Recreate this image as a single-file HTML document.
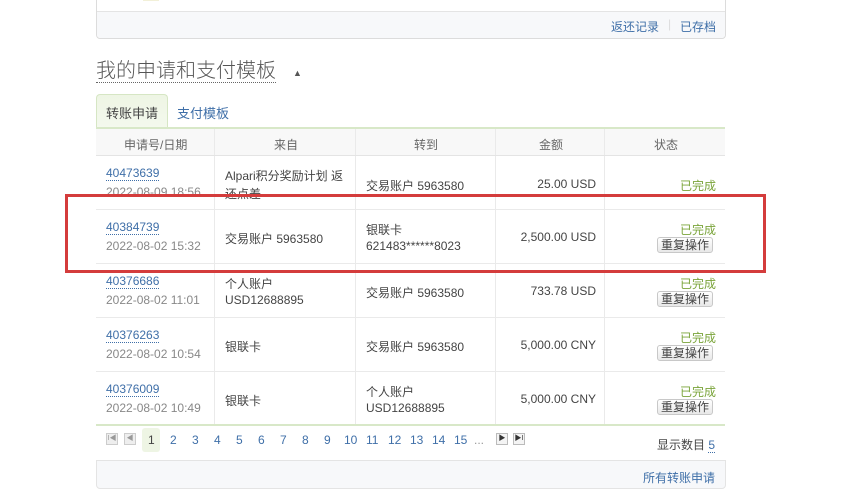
<!DOCTYPE html>
<html><head><meta charset="utf-8"><style>
*{margin:0;padding:0;box-sizing:border-box}
body{width:849px;height:491px;background:#fff;font-family:"Liberation Sans","Noto Sans CJK SC",sans-serif;font-size:12px;color:#444;position:relative;overflow:hidden}
.a{position:absolute}
.lnk{color:#3f6fa8}
.num{color:#3f6fa8;border-bottom:1px dotted #3f6fa8;line-height:13px}
.dt{color:#888}
.g{color:#7aa43a}
.amt{position:absolute;right:253px}
.st{position:absolute;right:133px;color:#7aa43a}
.rb{position:absolute;left:657px;border:1px solid #c8c8c8;border-radius:3px;background:linear-gradient(#fff,#e8e8e8);padding:0 3px;line-height:14px}
.row{position:absolute;left:96px;width:629px;height:54px;border-bottom:1px solid #eaeaea}
.c{position:absolute;top:0;height:100%;border-right:1px solid #eaeaea}
.pg{position:absolute;top:433px;color:#3f6fa8;font-size:12px}
</style></head><body>
<div class="a" style="left:96px;top:-5px;width:630px;height:44px;border:1px solid #dcdcdc;border-radius:4px"></div>
<div class="a" style="left:97px;top:11px;width:628px;height:27px;background:#f7f8fa;border-top:1px solid #e4e4e4;border-radius:0 0 4px 4px"></div>
<div class="a" style="left:143px;top:-4px;width:16px;height:5px;background:#f2f0d8"></div>
<div class="a lnk" style="left:611px;top:18px">返还记录</div>
<div class="a" style="left:668px;top:17px;color:#ddd">|</div>
<div class="a lnk" style="left:680px;top:18px">已存档</div>
<div class="a" style="left:96px;top:60px;font-size:20px;color:#555;border-bottom:1px dotted #666;line-height:22px;font-weight:300">我的申请和支付模板</div>
<div class="a" style="left:293px;top:68px;font-size:9px;color:#555">▲</div>
<div class="a" style="left:96px;top:94px;width:72px;height:35px;background:linear-gradient(#eef5e4,#f4f9ee);border:1px solid #d6e6c4;border-bottom:none;border-radius:4px 4px 0 0"></div>
<div class="a" style="left:106px;top:103px;font-size:13px;color:#444">转账申请</div>
<div class="a lnk" style="left:177px;top:103px;font-size:13px">支付模板</div>
<div class="a" style="left:96px;top:127px;width:629px;height:2px;background:#d8e8c8"></div>
<div class="row" style="top:129px;height:27px;background:#f8f8f8;border-bottom:1px solid #e4e4e4">
<div class="c" style="left:0;width:119px"></div><div class="c" style="left:119px;width:141px"></div><div class="c" style="left:260px;width:140px"></div><div class="c" style="left:400px;width:109px"></div>
</div>
<div class="a" style="top:136px;left:124px;color:#666">申请号/日期</div>
<div class="a" style="top:136px;left:274px;color:#666">来自</div>
<div class="a" style="top:136px;left:414px;color:#666">转到</div>
<div class="a" style="top:136px;left:539px;color:#666">金额</div>
<div class="a" style="top:136px;left:654px;color:#666">状态</div>

<div class="row" style="top:156px"><div class="c" style="left:0;width:119px"></div><div class="c" style="left:119px;width:141px"></div><div class="c" style="left:260px;width:140px"></div><div class="c" style="left:400px;width:109px"></div></div>
<div class="row" style="top:210px"><div class="c" style="left:0;width:119px"></div><div class="c" style="left:119px;width:141px"></div><div class="c" style="left:260px;width:140px"></div><div class="c" style="left:400px;width:109px"></div></div>
<div class="row" style="top:264px"><div class="c" style="left:0;width:119px"></div><div class="c" style="left:119px;width:141px"></div><div class="c" style="left:260px;width:140px"></div><div class="c" style="left:400px;width:109px"></div></div>
<div class="row" style="top:318px"><div class="c" style="left:0;width:119px"></div><div class="c" style="left:119px;width:141px"></div><div class="c" style="left:260px;width:140px"></div><div class="c" style="left:400px;width:109px"></div></div>
<div class="row" style="top:372px;border-bottom:2px solid #d8e8c8"><div class="c" style="left:0;width:119px"></div><div class="c" style="left:119px;width:141px"></div><div class="c" style="left:260px;width:140px"></div><div class="c" style="left:400px;width:109px"></div></div>

<div class="a" style="left:96px;top:157px;width:629px;height:43px;overflow:hidden">
<div class="a num" style="left:10px;top:10px">40473639</div>
<div class="a dt" style="left:10px;top:28px">2022-08-09 18:56</div>
<div class="a" style="left:129px;top:10px;width:125px;line-height:18px">Alpari积分奖励计划 返还点差</div>
<div class="a" style="left:270px;top:20px">交易账户 5963580</div>
<div class="a" style="right:129px;top:20px">25.00 USD</div>
<div class="a g" style="right:9px;top:20px">已完成</div>
</div>
<div class="a num" style="left:106px;top:221px">40384739</div>
<div class="a dt" style="left:106px;top:239px">2022-08-02 15:32</div>
<div class="a" style="left:225px;top:230px">交易账户 5963580</div>
<div class="a" style="left:366px;top:221px">银联卡</div>
<div class="a" style="left:366px;top:239px">621483******8023</div>
<div class="amt" style="top:230px">2,500.00 USD</div>
<div class="st" style="top:221px">已完成</div>
<div class="rb" style="top:237px">重复操作</div>

<div class="a num" style="left:106px;top:275px">40376686</div>
<div class="a dt" style="left:106px;top:293px">2022-08-02 11:01</div>
<div class="a" style="left:225px;top:275px">个人账户</div>
<div class="a" style="left:225px;top:293px">USD12688895</div>
<div class="a" style="left:366px;top:284px">交易账户 5963580</div>
<div class="amt" style="top:284px">733.78 USD</div>
<div class="st" style="top:275px">已完成</div>
<div class="rb" style="top:291px">重复操作</div>

<div class="a num" style="left:106px;top:329px">40376263</div>
<div class="a dt" style="left:106px;top:347px">2022-08-02 10:54</div>
<div class="a" style="left:225px;top:338px">银联卡</div>
<div class="a" style="left:366px;top:338px">交易账户 5963580</div>
<div class="amt" style="top:338px">5,000.00 CNY</div>
<div class="st" style="top:329px">已完成</div>
<div class="rb" style="top:345px">重复操作</div>

<div class="a num" style="left:106px;top:383px">40376009</div>
<div class="a dt" style="left:106px;top:401px">2022-08-02 10:49</div>
<div class="a" style="left:225px;top:392px">银联卡</div>
<div class="a" style="left:366px;top:383px">个人账户</div>
<div class="a" style="left:366px;top:401px">USD12688895</div>
<div class="amt" style="top:392px">5,000.00 CNY</div>
<div class="st" style="top:383px">已完成</div>
<div class="rb" style="top:399px">重复操作</div>

<div class="a" style="left:106px;top:433px;width:12px;height:12px;border:1px solid #ccc;background:#eee;font-size:7px;color:#999;text-align:center;line-height:10px">I◀</div>
<div class="a" style="left:124px;top:433px;width:12px;height:12px;border:1px solid #ccc;background:#eee;font-size:7px;color:#999;text-align:center;line-height:10px">◀</div>
<div class="a" style="left:142px;top:428px;width:18px;height:24px;background:#eef5e4;border-radius:3px"></div>
<div class="pg" style="left:148px;color:#444">1</div>
<div class="pg" style="left:170px">2</div>
<div class="pg" style="left:192px">3</div>
<div class="pg" style="left:214px">4</div>
<div class="pg" style="left:236px">5</div>
<div class="pg" style="left:258px">6</div>
<div class="pg" style="left:280px">7</div>
<div class="pg" style="left:302px">8</div>
<div class="pg" style="left:324px">9</div>
<div class="pg" style="left:344px">10</div>
<div class="pg" style="left:366px">11</div>
<div class="pg" style="left:388px">12</div>
<div class="pg" style="left:410px">13</div>
<div class="pg" style="left:432px">14</div>
<div class="pg" style="left:454px">15</div>
<div class="pg" style="left:474px;color:#999">...</div>
<div class="a" style="left:496px;top:433px;width:12px;height:12px;border:1px solid #bbb;background:#f4f4f4;font-size:7px;color:#333;text-align:center;line-height:10px">▶</div>
<div class="a" style="left:513px;top:433px;width:12px;height:12px;border:1px solid #bbb;background:#f4f4f4;font-size:7px;color:#333;text-align:center;line-height:10px">▶I</div>
<div class="a" style="left:657px;top:436px;color:#444">显示数目 <span class="num">5</span></div>

<div class="a" style="left:96px;top:460px;width:630px;height:29px;background:#f7f8fa;border:1px solid #e4e4e4;border-radius:0 0 4px 4px"></div>
<div class="a lnk" style="left:643px;top:469px">所有转账申请</div>

<div class="a" style="left:65px;top:194px;width:701px;height:79px;border:3px solid #d43c3c"></div>
</body></html>
